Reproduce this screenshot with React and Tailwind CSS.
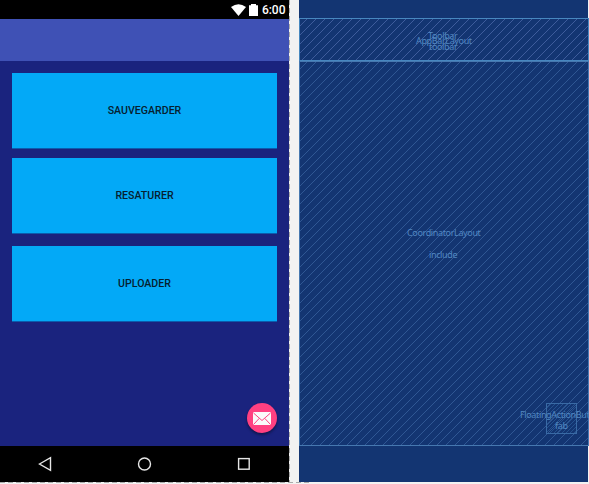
const label = "font-['Noto_Sans','Open_Sans',sans-serif] text-[9px] leading-[11px] tracking-[-0.36px] whitespace-nowrap";

function Hatch({ id, size, color, offset = 0 }) {
  return (
    <svg className="absolute inset-0 h-full w-full" shapeRendering="crispEdges">
      <defs>
        <pattern id={id} width={size} height={size} x={offset} patternUnits="userSpaceOnUse">
          {Array.from({ length: size }, (_, i) => (
            <rect key={i} x={i} y={size - 1 - i} width="1" height="1" fill={color} />
          ))}
        </pattern>
      </defs>
      <rect width="100%" height="100%" fill={`url(#${id})`} />
    </svg>
  );
}

function Action({ children, className = "" }) {
  return (
    <button className={`flex h-[75px] w-[265px] items-center justify-center bg-[#03a9f7] pt-px text-[10.6px] font-medium text-[#06202f] shadow-[0_1px_0_rgba(3,130,205,0.6)] ${className}`}>
      {children}
    </button>
  );
}

function Phone() {
  return (
    <section className="relative flex h-[482px] w-[289px] shrink-0 flex-col bg-[#1a237e] font-['Roboto',sans-serif]">
      <header className="flex h-[19px] items-center justify-end bg-black pr-[3.5px] text-white">
        <svg width="15" height="12" viewBox="0 0 15 12" fill="white"><path d="M0 3Q7.5-2.5 15 3L7.5 12Z" /></svg>
        <svg className="ml-[2.5px]" width="9" height="12" viewBox="0 0 9 12" fill="white"><path d="M0 1.2h2V0h5v1.2h2V12H0Z" /></svg>
        <span className="ml-1 pt-px text-[12px] font-medium leading-none">6:00</span>
      </header>
      <div className="h-[42px] bg-[#3f51b5]" />
      <main className="flex flex-1 flex-col px-3 pt-3">
        <Action>SAUVEGARDER</Action>
        <Action className="mt-[10px]">RESATURER</Action>
        <Action className="mt-[13px]">UPLOADER</Action>
      </main>
      <div className="absolute left-[247px] top-[403px] flex h-[30px] w-[30px] items-center justify-center rounded-full bg-[#ff4081] shadow-[0_2px_3px_rgba(0,0,0,0.4)]">
        <svg className="mt-px" width="18" height="13" viewBox="0 0 18 13">
          <rect width="18" height="13" rx="1" fill="#fafafa" />
          <path d="M.5 1L9 8.5 17.5 1M.5 12.5L6.3 6.3M17.5 12.5L11.7 6.3" fill="none" stroke="#ff4081" strokeWidth="1" />
        </svg>
      </div>
      <nav className="h-9 bg-black">
        <svg width="289" height="36" fill="none" stroke="#e6e6e6" strokeWidth="1.4">
          <path d="M39.5 18L50.5 11.7V24.3Z" />
          <circle cx="144.5" cy="18" r="6" />
          <rect x="238.6" y="12.6" width="10.6" height="10.6" />
        </svg>
      </nav>
    </section>
  );
}

function Blueprint() {
  return (
    <section className="relative flex h-[482px] w-[290px] shrink-0 flex-col overflow-hidden text-[#5288c2]">
      <div className="mr-px h-[18px] bg-[#133572]" />
      <div className="relative h-[43px] border border-[#4787bf] bg-[#133572]">
        <Hatch id="bar" size={9} color="#3e5c9c" offset={-2} />
      </div>
      <div className="relative h-[385px] border border-[#4678b0] bg-[#133572]">
        <Hatch id="body" size={9} color="#2f5794" offset={-2} />
      </div>
      <div className="mr-px flex-1 bg-[#133572]" />
      <span className={`absolute left-[129px] top-[30px] ${label}`}>Toolbar</span>
      <span className={`absolute left-[117px] top-[35px] ${label}`}>AppBarLayout</span>
      <span className={`absolute left-[130px] top-[41px] ${label}`}>toolbar</span>
      <span className={`absolute left-[108px] top-[227px] ${label}`}>CoordinatorLayout</span>
      <span className={`absolute left-[130px] top-[249px] ${label}`}>include</span>
      <div className="absolute left-[247px] top-[403px] h-[31px] w-[31px] border border-[#396aa5]">
        <Hatch id="fab" size={4} color="#24528f" />
      </div>
      <span className={`absolute left-[221px] top-[409px] ${label}`}>FloatingActionButton</span>
      <span className={`absolute left-[256px] top-[420px] ${label}`}>fab</span>
    </section>
  );
}

export default function App() {
  return (
    <div className="h-[484px] w-[589px] overflow-hidden bg-[#f2f2f2]">
      <div className="flex">
        <Phone />
        <svg className="mr-[9px] shrink-0" width="1" height="482"><path d="M.5 0V482" stroke="#aaa" strokeDasharray="5 3" /></svg>
        <Blueprint />
      </div>
      <svg width="310" height="2"><path d="M0 .5H310" stroke="#aaa" strokeDasharray="5 3" /></svg>
    </div>
  );
}
